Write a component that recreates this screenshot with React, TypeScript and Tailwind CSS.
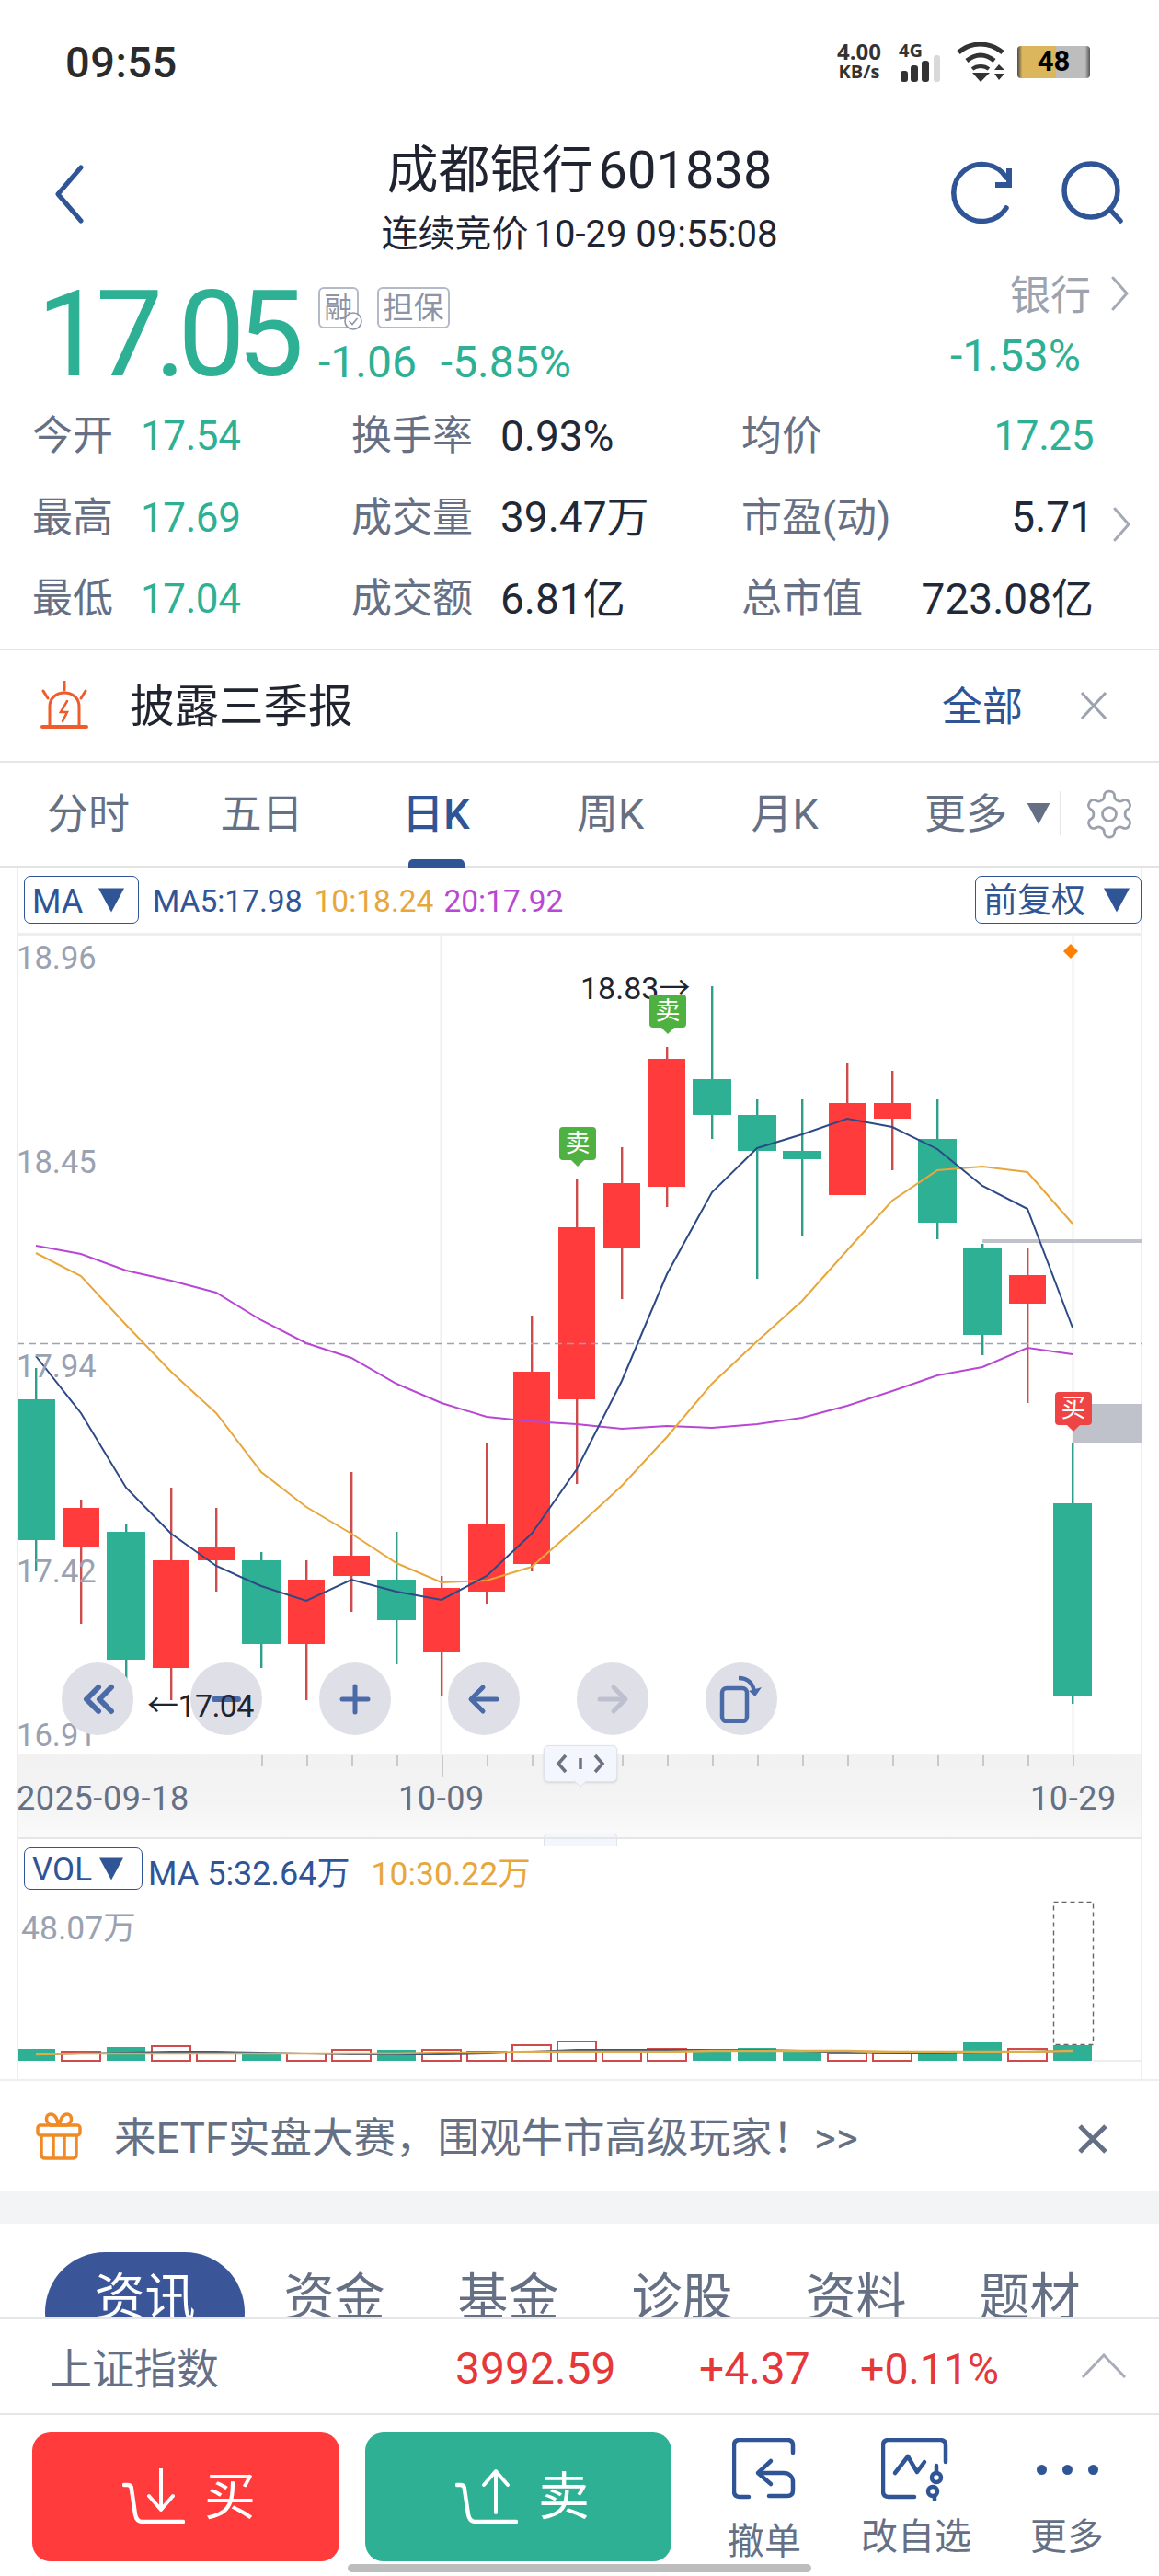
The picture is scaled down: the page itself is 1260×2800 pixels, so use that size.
import React from "react";

const RED = "#ff3b3b";
const GREEN = "#2db093";
const NAVY = "#2f5597";

// [high, bodyTop, bodyBottom, low, isRed]
const candles: [number, number, number, number, boolean][] = [
  [1487, 1521, 1674, 1708, false],
  [1630, 1639, 1682, 1765, true],
  [1656, 1665, 1804, 1852, false],
  [1617, 1696, 1813, 1848, true],
  [1639, 1682, 1696, 1730, true],
  [1687, 1696, 1787, 1813, false],
  [1696, 1717, 1787, 1848, true],
  [1600, 1691, 1713, 1752, true],
  [1665, 1717, 1761, 1809, false],
  [1713, 1726, 1796, 1843, true],
  [1569, 1656, 1730, 1743, true],
  [1430, 1491, 1700, 1708, true],
  [1282, 1334, 1521, 1613, true],
  [1247, 1286, 1356, 1412, true],
  [1138, 1151, 1290, 1312, true],
  [1072, 1173, 1212, 1238, false],
  [1195, 1212, 1251, 1390, false],
  [1195, 1251, 1260, 1343, false],
  [1155, 1199, 1299, 1299, true],
  [1164, 1199, 1216, 1272, true],
  [1195, 1238, 1329, 1347, false],
  [1352, 1356, 1451, 1473, false],
  [1356, 1386, 1417, 1525, true],
  [1569, 1634, 1843, 1852, false],
];

const ma5 = [1474, 1536, 1617, 1667, 1702, 1724, 1740, 1717, 1730, 1739, 1713, 1667, 1597, 1501, 1385, 1296, 1248, 1233, 1216, 1225, 1249, 1289, 1314, 1443];
const ma10 = [1362, 1387, 1440, 1491, 1536, 1600, 1638, 1667, 1699, 1720, 1718, 1703, 1660, 1615, 1562, 1504, 1458, 1414, 1359, 1305, 1272, 1268, 1274, 1330];
const ma20 = [1354, 1363, 1381, 1392, 1405, 1435, 1460, 1476, 1504, 1525, 1540, 1545, 1548, 1553, 1550, 1552, 1548, 1541, 1528, 1512, 1495, 1486, 1465, 1472];
const volTops = [2227, 2230, 2225, 2224, 2232, 2232, 2232, 2228, 2228, 2228, 2230, 2223, 2219, 2229, 2227, 2228, 2226, 2228, 2232, 2232, 2232, 2220, 2227, 2223];
const volRed = [false, true, false, true, true, false, true, true, false, true, true, true, true, true, true, false, false, false, true, true, false, false, true, false];
const volMa5 = [2233, 2232, 2231, 2230, 2230, 2231, 2232, 2233, 2233, 2233, 2232, 2230, 2228, 2228, 2228, 2228, 2228, 2229, 2231, 2232, 2232, 2231, 2230, 2229];
const volMa10 = [2233, 2232, 2232, 2232, 2232, 2232, 2232, 2232, 2232, 2231, 2231, 2230, 2230, 2230, 2230, 2229, 2229, 2229, 2229, 2230, 2230, 2230, 2230, 2229];

const cx = (i: number) => 39 + i * 49;
const line = (ys: number[]) => ys.map((y, i) => `${cx(i)},${y}`).join(" ");

function Triangle({ className }: { className: string }) {
  return (
    <svg viewBox="0 0 28 26" className={className}>
      <path d="M0 0H28L14 26Z" fill="currentColor" />
    </svg>
  );
}

function StatusBar() {
  return (
    <div className="h-[120px] flex items-start justify-between pl-[71px] pr-[75px] text-[#333]">
      <div className="mt-[44px] text-[47px] leading-[48px] font-medium tracking-[0.5px] text-[#2b2b2b]">09:55</div>
      <div className="flex items-start mt-[44px]">
        <div className="w-[56px] flex flex-col items-center font-bold">
          <span className="text-[24px] leading-[24px] [font-family:'Open_Sans',sans-serif]">4.00</span>
          <span className="text-[20px] leading-[20px] [font-family:'Open_Sans',sans-serif]">KB/s</span>
        </div>
        <div className="ml-[15px] w-[48px] flex flex-col mt-[1px]">
          <span className="text-[20px] leading-[20px] font-bold [font-family:'Open_Sans',sans-serif]">4G</span>
          <svg width="48" height="29" viewBox="0 0 48 29" className="mt-[-5px]">
            <rect x="2" y="17" width="8" height="12" rx="3" fill="#333" />
            <rect x="13" y="11" width="8" height="18" rx="3" fill="#333" />
            <rect x="25" y="6" width="8" height="23" rx="3" fill="#333" />
            <rect x="38" y="0" width="7" height="29" rx="3" fill="#d9d9d9" />
          </svg>
        </div>
        <svg width="54" height="44" viewBox="0 0 54 44" className="ml-[15px] mt-[2px]" fill="none" stroke="#333" strokeWidth="5">
          <path d="M2 11C16 -1 35 -1 50 11" />
          <path d="M11 20C21 12 31 12 41 20" />
          <path d="M17 29C22 25 30 25 35 29" strokeWidth="4" />
          <path d="M17 33H36L26 43Z" fill="#333" stroke="none" />
          <path d="M41 30L46 24L52 30ZM41 34H52L46 41Z" fill="#333" stroke="none" />
        </svg>
        <div className="ml-[12px] mt-[6px] w-[79px] h-[35px] rounded-[4px] flex items-center justify-center bg-[linear-gradient(90deg,#4a4a4a_0%,#dcb65c_7%,#dcb65c_53%,#bdbdbd_53%,#bdbdbd_93%,#555_100%)] text-[31px] font-bold text-black">
          48
        </div>
      </div>
    </div>
  );
}

function Header() {
  return (
    <div className="h-[155px] grid grid-cols-[1fr_auto_1fr] relative">
      <svg width="34" height="64" viewBox="0 0 34 64" fill="none" stroke={NAVY} strokeWidth="5" strokeLinecap="round" strokeLinejoin="round" className="ml-[58px] mt-[59px]">
        <path d="M30 3L5 32L30 61" />
      </svg>
      <div className="flex flex-col items-center">
        <div className="mt-[27px] flex text-[56px] leading-[76px] text-[#1f2430] whitespace-nowrap">
          成都银行<span className="ml-[6px]">601838</span>
        </div>
        <div className="mt-[7px] flex text-[40px] leading-[50px] text-[#1f2430] whitespace-nowrap">
          连续竞价<span className="ml-[6px]">10-29 09:55:08</span>
        </div>
      </div>
      <div className="flex justify-end items-start pr-[38px] pt-[52px]">
        <svg width="75" height="75" viewBox="1030 172 75 75" fill="none" stroke={NAVY} strokeWidth="5.5" strokeLinecap="round">
          <path d="M1094 193A31 31 0 1 0 1094 226" />
          <path d="M1097 183V201H1082" strokeLinecap="butt" strokeWidth="6" />
        </svg>
        <svg width="72" height="75" viewBox="1150 172 72 75" fill="none" stroke={NAVY} strokeWidth="5.5" strokeLinecap="round" className="ml-[45px]">
          <circle cx="1186" cy="207" r="29" />
          <path d="M1207 228L1218 240" />
        </svg>
      </div>
    </div>
  );
}

function PriceRow() {
  return (
    <div className="h-[155px] flex relative">
      <div className="ml-[40px] mt-[19px] text-[130px] leading-[140px] font-normal tracking-[-9px] text-[#2db093] w-[306px]">17.05</div>
      <div className="flex flex-col">
        <div className="flex mt-[37px]">
          <div className="relative w-[44px] h-[45px] rounded-[6px] border-2 border-[#b4b9c8] flex items-center justify-center text-[31px] leading-none text-[#8d94a5]">
            融
            <svg width="22" height="22" viewBox="0 0 22 22" className="absolute right-[-7px] bottom-[-5px]" fill="#fff" stroke="#8d94a5" strokeWidth="1.6">
              <circle cx="11" cy="11" r="9" />
              <path d="M6.5 11L10 14.5L15.5 8" fill="none" />
            </svg>
          </div>
          <div className="ml-[20px] w-[79px] h-[45px] rounded-[6px] border-2 border-[#b4b9c8] flex items-center justify-center text-[33px] leading-none text-[#8d94a5]">担保</div>
        </div>
        <div className="mt-[9px] flex text-[48px] leading-[56px] text-[#2db093]">
          <span>-1.06</span>
          <span className="ml-[26px]">-5.85%</span>
        </div>
      </div>
      <div className="ml-auto flex flex-col items-end pr-[32px]">
        <div className="mt-[19px] flex items-center">
          <span className="text-[44px] leading-[56px] text-[#9ca3af]">银行</span>
          <svg width="20" height="38" viewBox="0 0 20 38" fill="none" stroke="#a3a9b5" strokeWidth="3" strokeLinecap="round" className="ml-[22px] mt-[-6px]">
            <path d="M2 2L17 19L2 36" />
          </svg>
        </div>
        <div className="mt-[9px] mr-[53px] text-[48px] leading-[56px] text-[#2db093]">-1.53%</div>
      </div>
    </div>
  );
}

const statRows = [
  ["今开", "17.54", "换手率", "0.93%", "均价", "17.25"],
  ["最高", "17.69", "成交量", "39.47万", "市盈(动)", "5.71"],
  ["最低", "17.04", "成交额", "6.81亿", "总市值", "723.08亿"],
];

function Stats() {
  return (
    <div className="h-[275px] pl-[35px] flex flex-col">
      {statRows.map((r, i) => (
        <div key={r[0]} className="h-[88.5px] flex items-center text-[44px] relative">
          <span className="w-[118px] text-[#667085]">{r[0]}</span>
          <span className="w-[229px] text-[#2db093] tracking-[-0.4px]">{r[1]}</span>
          <span className="w-[162px] text-[#667085]">{r[2]}</span>
          <span className="w-[262px] text-[#1f2937] text-[46px]">{r[3]}</span>
          <span className="w-[383px] flex justify-between items-center">
            <span className="text-[#667085]">{r[4]}</span>
            <span className={i === 0 ? "text-[#2db093] tracking-[-0.4px]" : "text-[#1f2937] text-[46px]"}>{r[5]}</span>
          </span>
          {i === 1 && (
            <svg width="20" height="38" viewBox="0 0 20 38" fill="none" stroke="#a3a9b5" strokeWidth="3" strokeLinecap="round" className="ml-[21px] mt-[14px]">
              <path d="M2 2L17 19L2 36" />
            </svg>
          )}
        </div>
      ))}
    </div>
  );
}

function AlertRow() {
  return (
    <div className="h-[124px] border-t-2 border-b-2 border-[#e6e6e6] flex items-center pl-[44px] pr-[55px]">
      <svg width="52" height="54" viewBox="0 0 52 54" fill="none" stroke="#ef5b2a" strokeWidth="3" strokeLinecap="round">
        <path d="M26 1V10M3 11L8 19M49 11L44 19" />
        <path d="M10 48V28C10 8 42 8 42 28V48" />
        <path d="M2 50H50" strokeWidth="4" />
        <path d="M29 22L22 34H29L24 44" strokeWidth="2.5" />
      </svg>
      <span className="ml-[45px] mt-[4px] text-[48.5px] leading-none text-[#1f2430]">披露三季报</span>
      <span className="ml-auto mt-[4px] text-[44px] leading-none text-[#2f5597]">全部</span>
      <svg width="32" height="32" viewBox="0 0 32 32" fill="none" stroke="#9ca3af" strokeWidth="3" className="ml-[61px]">
        <path d="M3 2L29 30M29 2L3 30" />
      </svg>
    </div>
  );
}

function PeriodTabs() {
  const tabs = [
    { t: "分时", w: "w-[188px]" },
    { t: "五日", w: "w-[189px]" },
    { t: "日K", w: "w-[190px]" },
    { t: "周K", w: "w-[189px]" },
    { t: "月K", w: "w-[190px]" },
  ];
  return (
    <div className="h-[115px] border-b-[3px] border-[#e3e3e3] flex items-start text-[45px] text-[#667085] pt-[27px]">
      {tabs.map((x) => (
        <div key={x.t} className={`${x.w} ${x.t === "日K" ? "text-[#2f5597] font-medium" : ""} relative flex justify-center leading-[60px] first:ml-[2px]`}>
          {x.t}
          {x.t === "日K" && <div className="absolute top-[78px] w-[61px] h-[9px] rounded-t-[5px] bg-[#2f5597]" />}
        </div>
      ))}
      <span className="ml-[57px] leading-[60px]">更多</span>
      <Triangle className="ml-[20px] mt-[17px] w-[28px] h-[23px] text-[#667085]" />
      <div className="ml-[9px] mt-[4px] w-px h-[48px] bg-[#e5e7eb]" />
      <svg width="60" height="60" viewBox="0 0 24 24" fill="none" stroke="#9aa1ad" strokeWidth="1.1" className="ml-[23px] mt-[-1px]">
        <path d="M12.22 2h-.44a2 2 0 0 0-2 2v.18a2 2 0 0 1-1 1.73l-.43.25a2 2 0 0 1-2 0l-.15-.08a2 2 0 0 0-2.73.73l-.22.38a2 2 0 0 0 .73 2.73l.15.1a2 2 0 0 1 1 1.72v.51a2 2 0 0 1-1 1.74l-.15.09a2 2 0 0 0-.73 2.73l.22.38a2 2 0 0 0 2.73.73l.15-.08a2 2 0 0 1 2 0l.43.25a2 2 0 0 1 1 1.73V20a2 2 0 0 0 2 2h.44a2 2 0 0 0 2-2v-.18a2 2 0 0 1 1-1.73l.43-.25a2 2 0 0 1 2 0l.15.08a2 2 0 0 0 2.73-.73l.22-.39a2 2 0 0 0-.73-2.73l-.15-.08a2 2 0 0 1-1-1.74v-.5a2 2 0 0 1 1-1.74l.15-.09a2 2 0 0 0 .73-2.73l-.22-.38a2 2 0 0 0-2.73-.73l-.15.08a2 2 0 0 1-2 0l-.43-.25a2 2 0 0 1-1-1.73V4a2 2 0 0 0-2-2z" />
        <circle cx="12" cy="12" r="3" />
      </svg>
    </div>
  );
}

function ChartHead() {
  return (
    <div className="h-[73px] flex items-start pt-[8px] pl-[6px] pr-0 border-b-[3px] border-[#eeeeee]">
      <div className="w-[125px] h-[52px] rounded-[7px] border border-[#2f5597] flex items-center pl-[8px] text-[36px] leading-none text-[#2f5597]">
        <span className="mt-[3px]">MA</span>
        <Triangle className="ml-[17px] w-[28px] h-[27px] text-[#2f5597]" />
      </div>
      <div className="ml-[15px] mt-[10px] flex text-[33.5px] leading-[36px]">
        <span className="text-[#2f5597]">MA5:17.98</span>
        <span className="ml-[13px] text-[#e8a73c]">10:18.24</span>
        <span className="ml-[11px] text-[#b848d4]">20:17.92</span>
      </div>
      <div className="ml-auto mr-[-1px] w-[181px] h-[52px] rounded-[7px] border border-[#2f5597] flex items-center pl-[8px] text-[37px] leading-none text-[#2f5597]">
        <span className="mt-[2px]">前复权</span>
        <Triangle className="ml-[20px] w-[28px] h-[27px] text-[#2f5597]" />
      </div>
    </div>
  );
}

function Badge({ text, color, className }: { text: string; color: string; className: string }) {
  return (
    <div className={`absolute w-[40px] h-[36px] rounded-[4px] flex items-center justify-center text-[27px] leading-none text-white ${color} ${className}`}>
      {text}
      <div className={`absolute bottom-[-5px] left-[15px] w-[10px] h-[10px] rotate-45 ${color}`} />
    </div>
  );
}

const ctrlIcons = [
  <path key="a" d="M20 6L7 19L20 32M34 6L21 19L34 32" strokeWidth="6" />,
  <path key="b" d="M6 19H32" strokeWidth="6" />,
  <path key="c" d="M5 19H33M19 5V33" strokeWidth="5" />,
  <path key="d" d="M6 19H33M18 6L5 19L18 32" strokeWidth="5" />,
  <path key="e" d="M5 19H32M20 6L33 19L20 32" strokeWidth="5" />,
];

function ChartControls() {
  return (
    <div className="absolute top-[790px] left-[47px] flex gap-[62px]">
      {ctrlIcons.map((icon, i) => (
        <div key={i} className="w-[78px] h-[79px] rounded-full bg-[#dfe0e7] flex items-center justify-center">
          <svg width="38" height="38" viewBox="0 0 38 38" fill="none" stroke={i === 4 ? "#bdc1cf" : "#4a6aa8"} strokeLinecap="round" strokeLinejoin="round">
            {icon}
          </svg>
        </div>
      ))}
      <div className="w-[78px] h-[79px] rounded-full bg-[#dfe0e7] flex items-center justify-center">
        <svg width="50" height="52" viewBox="0 0 50 52" fill="none" stroke="#4a6aa8" strokeWidth="4.5" strokeLinejoin="round">
          <rect x="4" y="14" width="27" height="36" rx="5" />
          <path d="M22 3C32 3 38 9 39 19" />
          <path d="M33 17L40 23L47 13Z" fill="#4a6aa8" stroke="none" />
        </svg>
      </div>
    </div>
  );
}

function Chart() {
  return (
    <div className="relative mx-[18px] border-x-2 border-[#eeeeee]">
      <div className="relative h-[889px]">
        <svg className="absolute inset-0" width="1222" height="889" viewBox="20 1017 1222 889">
          <path d="M479.5 1017V1906M1166.5 1017V1906" stroke="#eeeeee" strokeWidth="2" />
          {candles.map(([hi, top, bot, lo, red], i) => (
            <g key={i}>
              <rect x={cx(i) - 1} y={hi} width="2.4" height={lo - hi} fill={red ? "#cf4c4c" : "#2f9e8c"} />
              <rect x={cx(i) - (red ? 20 : 21)} y={top} width={red ? 40 : 42} height={bot - top} fill={red ? RED : GREEN} />
            </g>
          ))}
          <path d="M18 1460.5H1241" stroke="#9aa3bb" strokeWidth="1.6" strokeDasharray="8 5" />
          <rect x="1068" y="1347" width="173" height="4" fill="#bfc2cb" />
          <rect x="1166" y="1526" width="75" height="43" fill="#bfc2cb" />
          <polyline points={line(ma20)} fill="none" stroke="#b848d4" strokeWidth="2" />
          <polyline points={line(ma10)} fill="none" stroke="#e8a73c" strokeWidth="2" />
          <polyline points={line(ma5)} fill="none" stroke="#2d4a86" strokeWidth="2" />
          <path d="M1164 1026L1172 1034L1164 1042L1156 1034Z" fill="#ff8000" />
        </svg>
        {[
          ["18.96", "top-[4px]"],
          ["18.45", "top-[226px]"],
          ["17.94", "top-[448px]"],
          ["17.42", "top-[671px]"],
          ["16.91", "top-[849px]"],
        ].map(([v, c]) => (
          <span key={v} className={`absolute left-[-2px] ${c} text-[34.5px] leading-[40px] text-[#9aa2b1]`}>{v}</span>
        ))}
        <span className="absolute left-[611px] top-[37px] text-[34px] leading-[40px] text-[#1f2430] whitespace-nowrap">18.83→</span>
        <Badge text="卖" color="bg-[#4fb141]" className="left-[686px] top-[64px]" />
        <Badge text="卖" color="bg-[#4fb141]" className="left-[588px] top-[208px]" />
        <Badge text="买" color="bg-[#ef4444]" className="left-[1127px] top-[496px]" />
        <ChartControls />
        <span className="absolute left-[140px] top-[817px] text-[34px] leading-[40px] tracking-[-0.6px] text-[#1f2430] whitespace-nowrap">←17.04</span>
      </div>
      <div className="relative h-[91px] bg-[linear-gradient(180deg,#f2f2f2_0%,#f3f3f3_50%,#fafafa_100%)]">
        {candles.map((_, i) =>
          i >= 5 ? <div key={i} className={`absolute top-[2px] w-[2px] bg-[#c9c9c9] ${i === 9 ? "h-[24px]" : "h-[12px]"}`} style={{ left: cx(i) - 20 }} /> : null
        )}
        <span className="absolute left-[-2px] top-[29px] text-[36px] leading-[40px] tracking-[0.6px] text-[#667085]">2025-09-18</span>
        <span className="absolute left-[413px] top-[29px] text-[36px] leading-[40px] tracking-[0.6px] text-[#667085]">10-09</span>
        <span className="absolute left-[1100px] top-[29px] text-[36px] leading-[40px] tracking-[0.6px] text-[#667085]">10-29</span>
        <div className="absolute left-[571px] top-[-9px] w-[80px] h-[40px] rounded-[5px] bg-[#f4f6fd] border border-[#dfe3ea] shadow-sm flex items-center justify-center">
          <svg width="56" height="24" viewBox="0 0 56 24" fill="none" stroke="#6b7280" strokeWidth="3.5">
            <path d="M12 3L4 12L12 21M44 3L52 12L44 21M28 6V18" />
          </svg>
          <div className="absolute bottom-[-5px] left-[34px] w-[10px] h-[10px] rotate-45 bg-[#f4f6fd] border-r border-b border-[#dfe3ea]" />
        </div>
        <div className="absolute left-[571px] top-[87px] w-[80px] h-[14px] rounded-t-[4px] bg-[#f4f6fd] border border-[#dfe3ea]" />
      </div>
    </div>
  );
}

function VolumePanel() {
  return (
    <div className="h-[263px] relative mx-[18px] border-x-2 border-[#eeeeee] border-t-2 border-t-[#e6e6e6]">
      <div className="flex items-start pt-[9px] pl-[6px]">
        <div className="w-[129px] h-[46px] rounded-[7px] border border-[#2f5597] flex items-center pl-[8px] text-[35px] leading-none text-[#2f5597]">
          <span className="mt-[2px]">VOL</span>
          <Triangle className="ml-[8px] w-[26px] h-[27px] text-[#2f5597]" />
        </div>
        <div className="ml-[6px] mt-[9px] flex text-[36px] leading-[40px] whitespace-nowrap">
          <span className="text-[#2f5597]">MA 5:32.64万</span>
          <span className="ml-[23px] text-[35.5px] text-[#e8a73c]">10:30.22万</span>
        </div>
      </div>
      <span className="absolute left-[3px] top-[77px] text-[35.5px] leading-[40px] text-[#9aa2b1]">48.07万</span>
      <svg className="absolute top-0 left-0" width="1222" height="261" viewBox="20 1999 1222 261">
        <rect x="1145.5" y="2067.5" width="43" height="155" fill="none" stroke="#666" strokeWidth="1.4" strokeDasharray="5 4" />
        {volTops.map((y, i) =>
          volRed[i] ? (
            <rect key={i} x={cx(i) - 21} y={y} width="42" height={2240 - y} fill="#fff" stroke="#d04b4b" strokeWidth="2" />
          ) : (
            <rect key={i} x={cx(i) - 21} y={y} width="42" height={2240 - y} fill={GREEN} />
          )
        )}
        <polyline points={line(volMa5)} fill="none" stroke="#3f5680" strokeWidth="2" />
        <polyline points={line(volMa10)} fill="none" stroke="#e0ac4a" strokeWidth="2.5" />
        <rect x="1188" y="2239" width="54" height="2" fill="#eeeeee" />
      </svg>
    </div>
  );
}

function Banner() {
  return (
    <div className="h-[122px] border-t-2 border-[#eeeeee] flex items-center pl-[39px] pr-[55px]">
      <svg width="50" height="52" viewBox="0 0 50 52" fill="none" stroke="#f08a24" strokeWidth="3.5" strokeLinejoin="round">
        <rect x="2" y="14" width="46" height="11" rx="3" />
        <path d="M6 25V46C6 49 8 50 10 50H40C42 50 44 49 44 46V25M19 25V50M31 25V50" />
        <path d="M24 14H16C9 10 11 2 16 2C21 2 24 8 24 14ZM26 14H34C41 10 39 2 34 2C29 2 26 8 26 14Z" />
      </svg>
      <span className="ml-[35px] mt-[5px] text-[45.5px] leading-none text-[#667085] whitespace-nowrap">来ETF实盘大赛，围观牛市高级玩家！&gt;&gt;</span>
      <svg width="34" height="32" viewBox="0 0 34 32" fill="none" stroke="#667085" strokeWidth="5" className="ml-auto mt-[6px]">
        <path d="M3 2L31 30M31 2L3 30" />
      </svg>
    </div>
  );
}

function InfoTabs() {
  const items = ["资金", "基金", "诊股", "资料", "题材"];
  return (
    <div className="h-[102px] overflow-hidden flex pl-[49px] text-[55px] text-[#667085]">
      <div className="w-[217px] h-[130px] mt-[31px] rounded-full bg-[#3a5699] text-white flex justify-center pt-[11px] leading-[76px]">资讯</div>
      {items.map((t, i) => (
        <div key={t} className={`w-[189px] flex justify-center mt-[42px] leading-[76px] ${i === 0 ? "ml-[3px]" : ""}`}>{t}</div>
      ))}
    </div>
  );
}

function IndexRow() {
  return (
    <div className="h-[106px] border-y-2 border-[#e6e6e6] flex items-center pl-[54px] pt-[6px] text-[46px] leading-none">
      <span className="w-[441px] text-[#667085]">上证指数</span>
      <span className="w-[265px] text-[#e5383b] text-[48px]">3992.59</span>
      <span className="w-[175px] text-[#e5383b] text-[48px]">+4.37</span>
      <span className="w-[240px] text-[#e5383b] text-[46.5px]">+0.11%</span>
      <svg width="50" height="28" viewBox="0 0 50 28" fill="none" stroke="#a8adb8" strokeWidth="3" className="mt-[-6px]">
        <path d="M2 26L25 2L48 26" />
      </svg>
    </div>
  );
}

function Tray({ up }: { up: boolean }) {
  return (
    <svg width="68" height="62" viewBox="0 0 68 62" fill="none" stroke="#fff" strokeWidth="4.5" strokeLinecap="round" strokeLinejoin="round">
      <path d="M2 18H6C9 18 10 20 10 23L14 50C15 56 18 58 22 58H66" />
      {up ? <path d="M44 48V4M31 18L44 3L57 18" strokeWidth="4" /> : <path d="M42 0V44M29 30L42 45L55 30" strokeWidth="4" />}
    </svg>
  );
}

function ActionBar() {
  return (
    <div className="h-[175px] flex items-start pl-[35px] pt-[19px] relative">
      <div className="w-[334px] h-[140px] rounded-[20px] bg-[#ff3b3b] flex items-center pl-[98px] text-[56px] leading-none text-white">
        <Tray up={false} />
        <span className="ml-[21px]">买</span>
      </div>
      <div className="ml-[28px] w-[333px] h-[140px] rounded-[20px] bg-[#2db093] flex items-center pl-[98px] text-[56px] leading-none text-white">
        <Tray up />
        <span className="ml-[22px]">卖</span>
      </div>
      <div className="w-[202px] mt-[6px] flex flex-col items-center">
        <svg width="70" height="68" viewBox="0 0 70 68" fill="none" stroke={NAVY} strokeWidth="4.5" strokeLinecap="round" strokeLinejoin="round">
          <path d="M18 64H8C4 64 2 62 2 58V8C2 4 4 2 8 2H60C64 2 66 4 66 8V16" />
          <path d="M42 25L28 38L42 50M28 38H56C62 38 66 42 66 48V57C66 61 64 63 60 63H40" />
        </svg>
        <span className="mt-[22px] text-[40px] leading-[46px] text-[#667085]">撤单</span>
      </div>
      <div className="w-[128px] mt-[6px] flex flex-col items-center">
        <svg width="76" height="68" viewBox="0 0 76 68" fill="none" stroke={NAVY} strokeWidth="4.5" strokeLinecap="round" strokeLinejoin="round">
          <path d="M36 64H8C4 64 2 62 2 58V8C2 4 4 2 8 2H64C68 2 70 4 70 8V26" />
          <path d="M15 38L29 20L39 37L47 26" />
          <circle cx="60" cy="43" r="5" />
          <circle cx="56" cy="58" r="5" />
          <path d="M60 30V38M58 63V67" />
        </svg>
        <span className="mt-[17px] text-[40px] leading-[46px] text-[#667085] whitespace-nowrap">改自选</span>
      </div>
      <div className="w-[200px] mt-[6px] flex flex-col items-center">
        <div className="h-[68px] flex items-center gap-[17px]">
          <span className="w-[11px] h-[11px] rounded-full bg-[#2f5597]" />
          <span className="w-[11px] h-[11px] rounded-full bg-[#2f5597]" />
          <span className="w-[11px] h-[11px] rounded-full bg-[#2f5597]" />
        </div>
        <span className="mt-[17px] text-[40px] leading-[46px] text-[#667085]">更多</span>
      </div>
      <div className="absolute left-[378px] top-[162px] w-[504px] h-[9px] rounded-full bg-[#bdbdbd]" />
    </div>
  );
}

export default function App() {
  return (
    <div className="w-[1260px] h-[2800px] overflow-hidden bg-white [font-family:Roboto,'Noto_Sans_CJK_SC',sans-serif]">
      <StatusBar />
      <Header />
      <PriceRow />
      <Stats />
      <AlertRow />
      <PeriodTabs />
      <div className="mx-[18px] border-x-2 border-[#eeeeee]">
        <ChartHead />
      </div>
      <Chart />
      <VolumePanel />
      <Banner />
      <div className="h-[35px] bg-[#f3f4f6]" />
      <InfoTabs />
      <IndexRow />
      <ActionBar />
    </div>
  );
}
